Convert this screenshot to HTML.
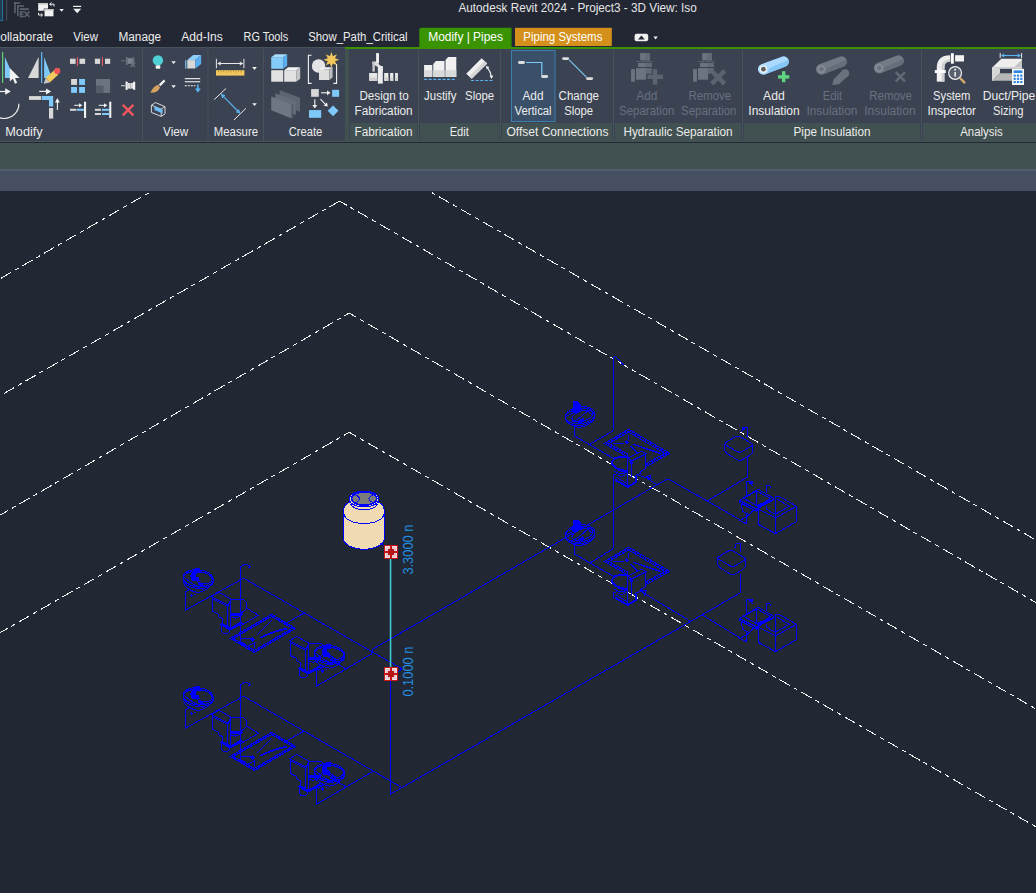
<!DOCTYPE html>
<html lang="en">
<head>
<meta charset="utf-8">
<title>Autodesk Revit 2024 - Project3 - 3D View: Iso</title>
<style>
html,body{margin:0;padding:0;background:#222833;overflow:hidden;}
body{width:1036px;height:893px;font-family:"Liberation Sans", sans-serif;}
svg{display:block;position:absolute;left:0;top:0;}
svg text{font-family:"Liberation Sans", sans-serif;}
</style>
</head>
<body>
<svg width="1036" height="893" viewBox="0 0 1036 893">
<rect x="0" y="0" width="1036" height="893" fill="#222833" />
<rect x="0" y="0" width="1036" height="47" fill="#222733" />
<rect x="0" y="47" width="1036" height="95" fill="#3b4352" />
<rect x="0" y="47" width="345" height="1" fill="#46535a" />
<rect x="0" y="141" width="1036" height="1" fill="#46555a" />
<rect x="0" y="142" width="1036" height="1" fill="#232935" />
<rect x="0" y="143" width="1036" height="26" fill="#415050" />
<rect x="0" y="169" width="1036" height="2" fill="#525c70" />
<rect x="0" y="171" width="1036" height="20" fill="#464e62" />
<rect x="345" y="47" width="691" height="2" fill="#3a9402" />
<path d="M419.3 49 V29.5 Q419.3 27.7 421.2 27.7 H511.4 V49 Z" fill="#3a9402" stroke="none" stroke-width="1" />
<rect x="510.6" y="27.7" width="0.9" height="19.5" fill="#2f7a06" />
<rect x="515" y="27.8" width="96.8" height="18.2" fill="#d4901a" />
<rect x="345" y="49" width="4" height="93" fill="#415050" />
<rect x="350" y="123" width="67.5" height="19" fill="#415050" />
<rect x="420" y="123" width="79.5" height="19" fill="#415050" />
<rect x="502" y="123" width="110" height="19" fill="#415050" />
<rect x="615" y="123" width="126" height="19" fill="#415050" />
<rect x="744" y="123" width="176" height="19" fill="#415050" />
<rect x="923" y="123" width="113" height="19" fill="#415050" />
<rect x="142" y="49" width="1" height="92" fill="#45535a" />
<rect x="207.5" y="49" width="1" height="92" fill="#45535a" />
<rect x="263" y="49" width="1" height="92" fill="#45535a" />
<rect x="418" y="50" width="1" height="91" fill="#45545a" />
<rect x="500" y="50" width="1" height="91" fill="#45545a" />
<rect x="613" y="50" width="1" height="91" fill="#45545a" />
<rect x="742" y="50" width="1" height="91" fill="#45545a" />
<rect x="921" y="50" width="1" height="91" fill="#45545a" />
<rect x="0" y="0" width="2.7" height="20.7" fill="#1d3b52" />
<rect x="2" y="0" width="0.8" height="20.7" fill="#2a82ac" />
<rect x="0" y="20" width="2.8" height="0.8" fill="#2a82ac" />
<rect x="6.2" y="0" width="1" height="20.5" fill="#495062" />
<rect x="14.2" y="2.2" width="6" height="1.6" fill="#5c626c" />
<rect x="14.2" y="2.2" width="1.6" height="11" fill="#5c626c" />
<rect x="17" y="5.2" width="7" height="1.6" fill="#5c626c" />
<rect x="17" y="5.2" width="1.6" height="11" fill="#5c626c" />
<rect x="19.8" y="8.2" width="9" height="1.8" fill="#5c626c" />
<rect x="19.8" y="11.2" width="1.6" height="6" fill="#5c626c" />
<rect x="19.8" y="11.2" width="4.2" height="1.4" fill="#5c626c" />
<rect x="19.8" y="13.5" width="3.6" height="1.3" fill="#5c626c" />
<rect x="19.8" y="15.8" width="4.2" height="1.4" fill="#5c626c" />
<path d="M24.5 11.5 L29.5 17 M29.5 11.5 L24.5 17" fill="none" stroke="#5c626c" stroke-width="1.7" />
<rect x="38.2" y="3.2" width="9.8" height="7.6" fill="#f2f2f2" />
<rect x="38.2" y="3.2" width="9.8" height="1.4" fill="#c8c8c8" />
<rect x="44.1" y="9" width="9.8" height="7.8" fill="#f2f2f2" stroke="#222733" stroke-width="0.8"/>
<rect x="44.1" y="9" width="9.8" height="1.6" fill="#c8c8c8" />
<path d="M54 6.5 V4.2 H50 M51.5 2.6 L49.6 4.2 L51.5 5.8" fill="none" stroke="#f2f2f2" stroke-width="1" />
<path d="M38.6 12.8 V15 H42.2 M40.8 13.4 L42.6 15 L40.8 16.6" fill="none" stroke="#f2f2f2" stroke-width="1" />
<path d="M59.40 9.00 L63.80 9.00 L61.60 11.80 Z" fill="#f0f0f0" stroke="none" stroke-width="1" />
<rect x="73" y="5.8" width="8.2" height="1.2" fill="#f0f0f0" />
<path d="M73.20 8.80 L81.20 8.80 L77.20 13.30 Z" fill="#f0f0f0" stroke="none" stroke-width="1" />
<text x="458.4" y="12.2" font-size="12.5" fill="#e6e6e6" text-anchor="start" textLength="238.4" lengthAdjust="spacingAndGlyphs" >Autodesk Revit 2024 - Project3 - 3D View: Iso</text>
<text x="0.3" y="41" font-size="12" fill="#ececec" text-anchor="start" textLength="52.5" lengthAdjust="spacingAndGlyphs" >ollaborate</text>
<text x="73.3" y="41" font-size="12" fill="#ececec" text-anchor="start" textLength="24.6" lengthAdjust="spacingAndGlyphs" >View</text>
<text x="118.5" y="41" font-size="12" fill="#ececec" text-anchor="start" textLength="42.6" lengthAdjust="spacingAndGlyphs" >Manage</text>
<text x="181.2" y="41" font-size="12" fill="#ececec" text-anchor="start" textLength="41.7" lengthAdjust="spacingAndGlyphs" >Add-Ins</text>
<text x="243.5" y="41" font-size="12" fill="#ececec" text-anchor="start" textLength="44.7" lengthAdjust="spacingAndGlyphs" >RG Tools</text>
<text x="308.2" y="41" font-size="12" fill="#ececec" text-anchor="start" textLength="99.4" lengthAdjust="spacingAndGlyphs" >Show_Path_Critical</text>
<text x="428.2" y="41" font-size="12" fill="#ffffff" text-anchor="start" textLength="74.8" lengthAdjust="spacingAndGlyphs" >Modify | Pipes</text>
<text x="523.3" y="41" font-size="12" fill="#ffffff" text-anchor="start" textLength="79.1" lengthAdjust="spacingAndGlyphs" >Piping Systems</text>
<rect x="634.6" y="33.8" width="13.6" height="7.4" rx="2" fill="#f0f0f0"/>
<path d="M638.00 39.40 L644.80 39.40 L641.40 35.60 Z" fill="#222733" stroke="none" stroke-width="1" />
<path d="M653.40 36.60 L657.80 36.60 L655.60 39.40 Z" fill="#f0f0f0" stroke="none" stroke-width="1" />
<text x="5.3" y="135.6" font-size="12" fill="#ececec" text-anchor="start" textLength="37.4" lengthAdjust="spacingAndGlyphs" >Modify</text>
<text x="163.1" y="135.6" font-size="12" fill="#ececec" text-anchor="start" textLength="25.2" lengthAdjust="spacingAndGlyphs" >View</text>
<text x="213.8" y="135.6" font-size="12" fill="#ececec" text-anchor="start" textLength="44.2" lengthAdjust="spacingAndGlyphs" >Measure</text>
<text x="288.7" y="135.6" font-size="12" fill="#ececec" text-anchor="start" textLength="33.6" lengthAdjust="spacingAndGlyphs" >Create</text>
<text x="354.5" y="135.6" font-size="12" fill="#ececec" text-anchor="start" textLength="58.1" lengthAdjust="spacingAndGlyphs" >Fabrication</text>
<text x="449.7" y="135.6" font-size="12" fill="#ececec" text-anchor="start" textLength="19.2" lengthAdjust="spacingAndGlyphs" >Edit</text>
<text x="506.5" y="135.6" font-size="12" fill="#ececec" text-anchor="start" textLength="102" lengthAdjust="spacingAndGlyphs" >Offset Connections</text>
<text x="623.4" y="135.6" font-size="12" fill="#ececec" text-anchor="start" textLength="109.2" lengthAdjust="spacingAndGlyphs" >Hydraulic Separation</text>
<text x="793.5" y="135.6" font-size="12" fill="#ececec" text-anchor="start" textLength="77" lengthAdjust="spacingAndGlyphs" >Pipe Insulation</text>
<text x="960.2" y="135.6" font-size="12" fill="#ececec" text-anchor="start" textLength="42.5" lengthAdjust="spacingAndGlyphs" >Analysis</text>
<text x="359.4" y="99.8" font-size="12" fill="#ececec" text-anchor="start" textLength="49.3" lengthAdjust="spacingAndGlyphs" >Design to</text>
<text x="354.5" y="114.7" font-size="12" fill="#ececec" text-anchor="start" textLength="58.1" lengthAdjust="spacingAndGlyphs" >Fabrication</text>
<text x="424.1" y="99.8" font-size="12" fill="#ececec" text-anchor="start" textLength="32.4" lengthAdjust="spacingAndGlyphs" >Justify</text>
<text x="465.1" y="99.8" font-size="12" fill="#ececec" text-anchor="start" textLength="29.1" lengthAdjust="spacingAndGlyphs" >Slope</text>
<rect x="511.5" y="50.5" width="43.5" height="71" fill="#3a5068" stroke="#3a7fb0" stroke-width="1"/>
<text x="522.5" y="99.8" font-size="12" fill="#ececec" text-anchor="start" textLength="21" lengthAdjust="spacingAndGlyphs" >Add</text>
<text x="514.5" y="114.7" font-size="12" fill="#ececec" text-anchor="start" textLength="37.1" lengthAdjust="spacingAndGlyphs" >Vertical</text>
<text x="558.6" y="99.8" font-size="12" fill="#ececec" text-anchor="start" textLength="40.4" lengthAdjust="spacingAndGlyphs" >Change</text>
<text x="564.2" y="114.7" font-size="12" fill="#ececec" text-anchor="start" textLength="28.7" lengthAdjust="spacingAndGlyphs" >Slope</text>
<text x="636.3" y="99.8" font-size="12" fill="#687080" text-anchor="start" textLength="21" lengthAdjust="spacingAndGlyphs" >Add</text>
<text x="619.1" y="114.7" font-size="12" fill="#687080" text-anchor="start" textLength="55.4" lengthAdjust="spacingAndGlyphs" >Separation</text>
<text x="688.5" y="99.8" font-size="12" fill="#687080" text-anchor="start" textLength="42.5" lengthAdjust="spacingAndGlyphs" >Remove</text>
<text x="681.1" y="114.7" font-size="12" fill="#687080" text-anchor="start" textLength="55.3" lengthAdjust="spacingAndGlyphs" >Separation</text>
<text x="763" y="99.8" font-size="12" fill="#ececec" text-anchor="start" textLength="21.7" lengthAdjust="spacingAndGlyphs" >Add</text>
<text x="748.3" y="114.7" font-size="12" fill="#ececec" text-anchor="start" textLength="51.4" lengthAdjust="spacingAndGlyphs" >Insulation</text>
<text x="822.8" y="99.8" font-size="12" fill="#687080" text-anchor="start" textLength="19.3" lengthAdjust="spacingAndGlyphs" >Edit</text>
<text x="806.4" y="114.7" font-size="12" fill="#687080" text-anchor="start" textLength="51.1" lengthAdjust="spacingAndGlyphs" >Insulation</text>
<text x="869.3" y="99.8" font-size="12" fill="#687080" text-anchor="start" textLength="42.5" lengthAdjust="spacingAndGlyphs" >Remove</text>
<text x="864.2" y="114.7" font-size="12" fill="#687080" text-anchor="start" textLength="51.4" lengthAdjust="spacingAndGlyphs" >Insulation</text>
<text x="933.1" y="99.8" font-size="12" fill="#ececec" text-anchor="start" textLength="37.3" lengthAdjust="spacingAndGlyphs" >System</text>
<text x="927.4" y="114.7" font-size="12" fill="#ececec" text-anchor="start" textLength="48.6" lengthAdjust="spacingAndGlyphs" >Inspector</text>
<text x="982.7" y="99.8" font-size="12" fill="#ececec" text-anchor="start" textLength="52.6" lengthAdjust="spacingAndGlyphs" >Duct/Pipe</text>
<text x="993" y="114.7" font-size="12" fill="#ececec" text-anchor="start" textLength="30.4" lengthAdjust="spacingAndGlyphs" >Sizing</text>
<rect x="2" y="52" width="1.2" height="31" fill="#5fd27a" />
<path d="M4.90 56.90 L4.90 77.90 L10.60 77.90 L10.60 70.00 Z" fill="#7ec8fa" stroke="none" stroke-width="1" />
<path d="M9.80 68.00 L9.80 81.50 L12.80 78.80 L15.00 83.80 L17.20 82.80 L15.00 78.00 L19.60 78.00 Z" fill="#f2f2f2" stroke="none" stroke-width="1" />
<path d="M28.00 77.90 L38.60 77.90 L38.60 56.90 Z" fill="#d8d8d8" stroke="none" stroke-width="1" />
<rect x="41" y="52" width="1.3" height="31" fill="#5ab4f0" />
<path d="M44.10 56.90 L44.10 77.90 L52.00 77.90 Z" fill="#7ec8fa" stroke="none" stroke-width="1" />
<path d="M45.80 77.80 L43.60 83.80 L49.80 82.40 Z" fill="#c8c8c8" stroke="none" stroke-width="1" />
<path d="M45.80 77.80 L54.40 70.00 L58.20 74.80 L49.80 82.40 Z" fill="#f2c75c" stroke="none" stroke-width="1" />
<circle cx="57.2" cy="70.9" r="3.1" fill="#f0555a" stroke="none" stroke-width="1" />
<rect x="70" y="58.7" width="5.6" height="5.2" fill="#d8d8d8" />
<rect x="79.5" y="58.7" width="5.6" height="5.2" fill="#d8d8d8" />
<rect x="76.9" y="57.2" width="1.1" height="8.8" fill="#f2555f" />
<rect x="94.9" y="58.7" width="5.2" height="5.2" fill="#d8d8d8" />
<rect x="105" y="58.7" width="5.2" height="5.2" fill="#d8d8d8" />
<rect x="101.9" y="57.2" width="1.1" height="8.8" fill="#f2555f" />
<rect x="121" y="60.3" width="4" height="1" fill="#69717e" />
<path d="M125.80 57.00 L127.60 57.00 L127.60 65.00 L125.80 65.00 Z" fill="#69717e" stroke="none" stroke-width="1" />
<rect x="127.6" y="58.2" width="5.2" height="5.6" fill="#7c8490" />
<rect x="132.6" y="57.4" width="1.8" height="7.2" fill="#69717e" />
<path d="M130.5 62.8 L135 67 M135 62.8 L130.5 67" fill="none" stroke="#69717e" stroke-width="1.4" />
<rect x="71.1" y="79" width="5.9" height="5.9" fill="#d8d8d8" />
<rect x="79.1" y="79" width="5.9" height="5.9" fill="#7ec8fa" />
<rect x="71.1" y="87" width="5.9" height="5.9" fill="#7ec8fa" />
<rect x="79.1" y="87" width="5.9" height="5.9" fill="#7ec8fa" />
<rect x="96" y="79" width="14.1" height="13.9" fill="#6b7380" />
<rect x="96" y="85.6" width="7.6" height="7.3" fill="#565d6a" />
<rect x="121" y="85.2" width="4" height="1" fill="#d8d8d8" />
<path d="M125.60 81.20 L127.80 82.00 L127.80 89.40 L125.60 90.20 Z" fill="#f2f2f2" stroke="none" stroke-width="1" />
<rect x="127.8" y="83" width="5.2" height="5.6" fill="#dcdcdc" />
<rect x="130" y="83" width="1" height="5.6" fill="#b0b0b0" />
<path d="M133.00 82.00 L135.20 81.40 L135.20 90.00 L133.00 89.40 Z" fill="#f2f2f2" stroke="none" stroke-width="1" />
<path d="M-10.5 103.8 A14.7 14.7 0 0 0 18.9 103.8" fill="none" stroke="#f2f2f2" stroke-width="1.2" />
<path d="M0 91.5 H7" fill="none" stroke="#f2f2f2" stroke-width="1.2" />
<path d="M5.20 88.20 L10.80 91.50 L5.20 94.80 Z" fill="#f2f2f2" stroke="none" stroke-width="1" />
<rect x="29" y="96.1" width="12.3" height="3.8" fill="#d8d8d8" />
<path d="M42.00 96.10 L53.20 96.10 L53.20 106.60 L49.00 106.60 L49.00 99.90 L42.00 99.90 Z" fill="#7ec8fa" stroke="none" stroke-width="1" />
<rect x="49" y="108" width="4.2" height="10.6" fill="#d8d8d8" />
<path d="M39.2 91.4 H47" fill="none" stroke="#f2f2f2" stroke-width="1.2" />
<path d="M46.00 88.40 L51.20 91.40 L46.00 94.40 Z" fill="#f2f2f2" stroke="none" stroke-width="1" />
<path d="M57.4 110 V101" fill="none" stroke="#f2f2f2" stroke-width="1.1" />
<path d="M55.00 102.60 L57.40 98.00 L59.80 102.60 Z" fill="#f2f2f2" stroke="none" stroke-width="1" />
<rect x="84" y="101.7" width="2.1" height="16.2" fill="#f2f2f2" />
<rect x="70" y="108.8" width="6.4" height="2" fill="#d8d8d8" />
<rect x="77" y="108.8" width="7" height="2" fill="#7ec8fa" />
<path d="M74.2 105.3 H80" fill="none" stroke="#f2f2f2" stroke-width="1" />
<path d="M79.00 103.20 L82.40 105.30 L79.00 107.40 Z" fill="#f2f2f2" stroke="none" stroke-width="1" />
<rect x="109.2" y="101.7" width="2.1" height="16.2" fill="#f2f2f2" />
<rect x="94.9" y="108.8" width="6" height="2" fill="#d8d8d8" />
<rect x="94.9" y="113" width="6" height="2" fill="#d8d8d8" />
<rect x="101.9" y="108.8" width="7.3" height="2" fill="#7ec8fa" />
<rect x="101.9" y="113" width="7.3" height="2" fill="#7ec8fa" />
<path d="M98.8 105.3 H105" fill="none" stroke="#f2f2f2" stroke-width="1" />
<path d="M104.00 103.20 L107.40 105.30 L104.00 107.40 Z" fill="#f2f2f2" stroke="none" stroke-width="1" />
<path d="M122.8 104.8 L133.4 115.4 M133.4 104.8 L122.8 115.4" fill="none" stroke="#f2555f" stroke-width="2.4" />
<circle cx="157.9" cy="60.4" r="5.2" fill="#4fd0d6" stroke="none" stroke-width="1" />
<rect x="155.7" y="65.2" width="4.6" height="3.6" rx="1" fill="#f4f4f4"/>
<path d="M171.30 61.20 L175.90 61.20 L173.60 64.00 Z" fill="#f2f2f2" stroke="none" stroke-width="1" />
<rect x="185.2" y="60.2" width="1.2" height="8.4" fill="#7ec8fa" />
<rect x="187.3" y="60.1" width="8" height="8.4" fill="#d8d8d8" />
<path d="M187.30 60.10 L193.20 55.00 L201.20 55.00 L195.30 60.10 Z" fill="#8dd0fb" stroke="none" stroke-width="1" />
<path d="M195.30 60.10 L201.20 55.00 L201.20 63.90 L195.30 68.50 Z" fill="#5aaef0" stroke="none" stroke-width="1" />
<path d="M150.4 92.8 C152.4 88.2 155 85.6 158.2 84.8 L160 87.6 C158.6 91.2 155.4 93 150.4 92.8 Z" fill="#d6a262" stroke="none" stroke-width="1" />
<path d="M159.6 85.4 L164.6 80.4" fill="none" stroke="#f2f2f2" stroke-width="2.2" />
<path d="M171.30 85.30 L175.90 85.30 L173.60 88.10 Z" fill="#f2f2f2" stroke="none" stroke-width="1" />
<rect x="184.8" y="78.1" width="15.4" height="1.1" fill="#f2f2f2" />
<rect x="184.8" y="81.2" width="15.4" height="1.1" fill="#f2f2f2" />
<path d="M184.8 85.7 H195.5" fill="none" stroke="#f2f2f2" stroke-width="1.1" stroke-dasharray="2 1"/>
<path d="M197.9 84.6 V89.4" fill="none" stroke="#5ab4f0" stroke-width="1.6" />
<path d="M195.00 88.60 L200.80 88.60 L197.90 92.80 Z" fill="#5ab4f0" stroke="none" stroke-width="1" />
<path d="M151.40 105.20 L155.40 102.60 L165.00 106.60 L165.00 113.80 L161.20 116.40 L151.40 112.40 Z" fill="none" stroke="#e8e8e8" stroke-width="0.9" />
<path d="M151.4 105.2 L161.2 109.2 L165 106.6 M161.2 109.2 V116.4" fill="none" stroke="#e8e8e8" stroke-width="0.9" />
<path d="M154.40 106.20 L162.60 109.60 L162.60 113.40 L154.40 110.00 Z" fill="#6fbef6" stroke="none" stroke-width="1" />
<path d="M216.4 58.8 V68.2 M243.9 58.8 V68.2 M218 63.5 H242.4" fill="none" stroke="#e8e8e8" stroke-width="1" />
<path d="M217.20 63.50 L220.60 61.40 L220.60 65.60 Z" fill="#e8e8e8" stroke="none" stroke-width="1" />
<path d="M243.20 63.50 L239.80 61.40 L239.80 65.60 Z" fill="#e8e8e8" stroke="none" stroke-width="1" />
<rect x="216" y="70.2" width="28.4" height="5.4" fill="#f2c75c" />
<path d="M218.5 70.2 v2 M221 70.2 v2.6 M223.5 70.2 v2 M226 70.2 v2.6 M228.5 70.2 v2 M231 70.2 v2.6 M233.5 70.2 v2 M236 70.2 v2.6 M238.5 70.2 v2 M241 70.2 v2.6" fill="none" stroke="#b08a30" stroke-width="0.7" />
<path d="M252.20 67.10 L256.80 67.10 L254.50 69.90 Z" fill="#f2f2f2" stroke="none" stroke-width="1" />
<path d="M214.2 99.6 L226.1 88.4 M234 119.9 L246 108.3" fill="none" stroke="#e8e8e8" stroke-width="1" />
<path d="M222.4 95.4 L238.8 112" fill="none" stroke="#5ab4f0" stroke-width="1.1" />
<path d="M220.60 93.60 L225.40 95.20 L222.40 98.40 Z" fill="#5ab4f0" stroke="none" stroke-width="1" />
<path d="M240.60 113.80 L235.80 112.20 L238.80 109.00 Z" fill="#5ab4f0" stroke="none" stroke-width="1" />
<path d="M252.20 103.20 L256.80 103.20 L254.50 106.00 Z" fill="#f2f2f2" stroke="none" stroke-width="1" />
<rect x="271.2" y="57.2" width="12" height="11.6" fill="#86ccfa" />
<path d="M271.20 57.20 L275.20 54.20 L287.20 54.20 L283.20 57.20 Z" fill="#a8dcff" stroke="none" stroke-width="1" />
<path d="M283.20 57.20 L287.20 54.20 L287.20 65.80 L283.20 68.80 Z" fill="#5aaef0" stroke="none" stroke-width="1" />
<rect x="271.2" y="70.2" width="12" height="11.5" fill="#e2e2e2" />
<path d="M271.20 70.20 L271.20 70.20 L283.20 70.20 L283.20 70.20 Z" fill="#f4f4f4" stroke="none" stroke-width="1" />
<path d="M283.20 70.20 L283.20 70.20 L283.20 81.70 L283.20 81.70 Z" fill="#c4c4c4" stroke="none" stroke-width="1" />
<rect x="284.2" y="70.2" width="12" height="11.5" fill="#e2e2e2" />
<path d="M284.20 70.20 L288.20 67.20 L300.20 67.20 L296.20 70.20 Z" fill="#f4f4f4" stroke="none" stroke-width="1" />
<path d="M296.20 70.20 L300.20 67.20 L300.20 78.70 L296.20 81.70 Z" fill="#c4c4c4" stroke="none" stroke-width="1" />
<path d="M311.6 55.2 H308.4 V83.4 H311.6 M333.4 83.4 H336.6 V64" fill="none" stroke="#f2f2f2" stroke-width="1.1" />
<circle cx="318.6" cy="66" r="6.8" fill="#e4e4e4" stroke="none" stroke-width="1" />
<rect x="319" y="69.6" width="10.4" height="10.4" fill="#dedede" />
<path d="M319.00 69.60 L322.20 67.20 L332.60 67.20 L329.40 69.60 Z" fill="#f2f2f2" stroke="none" stroke-width="1" />
<path d="M329.40 69.60 L332.60 67.20 L332.60 77.60 L329.40 80.00 Z" fill="#bdbdbd" stroke="none" stroke-width="1" />
<path d="M331.40 52.00 L332.89 56.20 L336.92 54.28 L335.00 58.31 L339.20 59.80 L335.00 61.29 L336.92 65.32 L332.89 63.40 L331.40 67.60 L329.91 63.40 L325.88 65.32 L327.80 61.29 L323.60 59.80 L327.80 58.31 L325.88 54.28 L329.91 56.20 Z" fill="#f2c75c" stroke="none" stroke-width="1" />
<path d="M279.60 90.00 L300.00 97.80 L300.00 111.80 L279.60 103.60 Z" fill="#5d6572" stroke="none" stroke-width="1" stroke-linejoin="round" stroke="#5d6572" stroke-width="1.6"/>
<path d="M275.40 93.30 L295.80 101.10 L295.80 115.10 L275.40 106.90 Z" fill="#656d7a" stroke="none" stroke-width="1" stroke-linejoin="round" stroke="#656d7a" stroke-width="1.6"/>
<path d="M271.20 96.60 L291.60 104.40 L291.60 118.40 L271.20 110.20 Z" fill="#6e7683" stroke="none" stroke-width="1" stroke-linejoin="round" stroke="#6e7683" stroke-width="1.6"/>
<path d="M291.60 104.40 L293.20 103.20 L293.20 117.20 L291.60 118.40 Z" fill="#545b68" stroke="none" stroke-width="1" />
<rect x="311.1" y="89.1" width="7.7" height="7.7" fill="#d8d8d8" />
<rect x="332.1" y="89.8" width="7" height="7" fill="#7ec8fa" />
<rect x="309" y="110.1" width="12.2" height="7.7" fill="#7ec8fa" />
<path d="M333.10 105.40 L338.50 110.80 L333.10 116.20 L327.70 110.80 Z" fill="#7ec8fa" stroke="none" stroke-width="1" />
<path d="M321 92.8 H328" fill="none" stroke="#f2f2f2" stroke-width="1.1" />
<path d="M327.00 90.40 L330.60 92.80 L327.00 95.20 Z" fill="#f2f2f2" stroke="none" stroke-width="1" />
<path d="M314.8 99.2 V106" fill="none" stroke="#f2f2f2" stroke-width="1.1" />
<path d="M312.40 105.00 L314.80 108.60 L317.20 105.00 Z" fill="#f2f2f2" stroke="none" stroke-width="1" />
<path d="M320.4 99.2 L326 104.8" fill="none" stroke="#f2f2f2" stroke-width="1.1" />
<path d="M327.80 106.60 L323.60 105.80 L327.00 102.40 Z" fill="#f2f2f2" stroke="none" stroke-width="1" />
<rect x="376.1" y="53.1" width="2.9" height="10.4" fill="#f0f0f0" />
<path d="M372.40 61.60 L375.40 61.60 L382.80 67.60 L382.80 71.00 L377.90 71.00 L377.90 67.00 L372.40 64.00 Z" fill="#e0e0e0" stroke="none" stroke-width="1" />
<rect x="372.4" y="62" width="2.4" height="9.6" fill="#c8c8c8" />
<rect x="377.9" y="66" width="4.9" height="17.6" fill="#ececec" />
<rect x="369.1" y="73" width="8.2" height="7.8" fill="#e6e6e6" />
<rect x="369.1" y="77.4" width="8.2" height="3.4" fill="#cfcfcf" />
<rect x="384.2" y="73" width="4.199999999999989" height="7.8" fill="#ececec" />
<rect x="384.2" y="77.4" width="4.199999999999989" height="3.4" fill="#d2d2d2" />
<rect x="390.1" y="73" width="3.1999999999999886" height="7.8" fill="#ececec" />
<rect x="390.1" y="77.4" width="3.1999999999999886" height="3.4" fill="#d2d2d2" />
<rect x="395.1" y="73" width="2.7999999999999545" height="7.8" fill="#ececec" />
<rect x="395.1" y="77.4" width="2.7999999999999545" height="3.4" fill="#d2d2d2" />
<path d="M424.10 65.00 L424.10 65.00 L432.30 65.00 L432.30 76.90 L424.10 76.90 Z" fill="#f1f1f1" stroke="none" stroke-width="1" />
<rect x="424.1" y="70.2" width="8.199999999999989" height="6.7" fill="#dadada" />
<path d="M433.30 64.10 L435.90 61.10 L444.50 61.10 L444.50 76.90 L433.30 76.90 Z" fill="#f1f1f1" stroke="none" stroke-width="1" />
<rect x="433.3" y="70.2" width="11.199999999999989" height="6.7" fill="#dadada" />
<path d="M445.50 59.90 L448.10 56.90 L456.30 56.90 L456.30 76.90 L445.50 76.90 Z" fill="#f1f1f1" stroke="none" stroke-width="1" />
<rect x="445.5" y="70.2" width="10.800000000000011" height="6.7" fill="#dadada" />
<path d="M424.1 79.4 H456.3" fill="none" stroke="#5ab4f0" stroke-width="1.1" stroke-dasharray="3 1.6"/>
<path d="M466.20 73.70 L481.60 58.30 L487.20 63.40 L471.80 78.80 Z" fill="#f0f0f0" stroke="none" stroke-width="1" stroke="#f0f0f0" stroke-width="1" stroke-linejoin="round"/>
<path d="M469.00 76.40 L484.40 61.00 L487.20 63.40 L471.80 78.80 Z" fill="#d6d6d6" stroke="none" stroke-width="1" />
<path d="M471.1 80.5 H492.8" fill="none" stroke="#5ab4f0" stroke-width="1.1" stroke-dasharray="3 1.6"/>
<path d="M487.4 67.6 Q491 72 491.4 77" fill="none" stroke="#f2f2f2" stroke-width="1.1" />
<path d="M485.80 66.00 L489.40 67.00 L486.80 69.60 Z" fill="#f2f2f2" stroke="none" stroke-width="1" />
<path d="M491.60 79.00 L489.60 75.80 L493.20 75.60 Z" fill="#f2f2f2" stroke="none" stroke-width="1" />
<rect x="518" y="61.1" width="7" height="2.8" rx="1.4" fill="#dcdcdc"/>
<path d="M526.1 62.5 H541.8 V75.1" fill="none" stroke="#7ec8fa" stroke-width="1.2" />
<rect x="541.1" y="75.1" width="7" height="2.8" rx="1.4" fill="#dcdcdc"/>
<rect x="562.1" y="57.2" width="7" height="2.8" rx="1.4" fill="#dcdcdc"/>
<path d="M569.1 59.9 L586.6 77.4" fill="none" stroke="#7ec8fa" stroke-width="1.2" />
<rect x="586.1" y="77.2" width="7" height="2.8" rx="1.4" fill="#dcdcdc"/>
<rect x="640.2" y="53.1" width="9.8" height="7.3" fill="#6c7481" />
<rect x="645.2" y="53.1" width="4.8" height="7.3" fill="#626a77" />
<path d="M636.3 61.6 H652.8" fill="none" stroke="#6c7481" stroke-width="0.9" stroke-dasharray="1.4 0.8"/>
<rect x="638.1" y="62.9" width="13.6" height="4.1" fill="#6c7481" />
<rect x="645.2" y="62.9" width="6.5" height="4.1" fill="#626a77" />
<rect x="636" y="68.1" width="10.1" height="11.6" fill="#6c7481" />
<rect x="646.1" y="68.1" width="5.6" height="5.6" fill="#626a77" />
<rect x="631.1" y="69.1" width="3.8" height="12.6" fill="#6c7481" />
<rect x="647.5" y="74.7" width="15.4" height="4.3" fill="#5c6370" />
<rect x="652.8" y="69.1" width="4.5" height="15.5" fill="#5c6370" />
<rect x="702.2" y="53.1" width="9.8" height="7.3" fill="#6c7481" />
<rect x="707.2" y="53.1" width="4.8" height="7.3" fill="#626a77" />
<path d="M698.3 61.6 H714.8" fill="none" stroke="#6c7481" stroke-width="0.9" stroke-dasharray="1.4 0.8"/>
<rect x="700.1" y="62.9" width="13.6" height="4.1" fill="#6c7481" />
<rect x="707.2" y="62.9" width="6.5" height="4.1" fill="#626a77" />
<rect x="698" y="68.1" width="10.1" height="11.6" fill="#6c7481" />
<rect x="708.1" y="68.1" width="5.6" height="5.6" fill="#626a77" />
<rect x="693.1" y="69.1" width="3.8" height="12.6" fill="#6c7481" />
<path d="M711.6 70.9 L724.6 83.9 M724.6 70.9 L711.6 83.9" fill="none" stroke="#5c6370" stroke-width="4.4" />
<path d="M765.27 74.16 L785.47 66.56 A5.3 5.3 0 0 0 781.73 56.64 L761.53 64.24 A5.3 5.3 0 0 0 765.27 74.16 Z" fill="#aadaff" stroke="none" stroke-width="1" />
<path d="M765.27 74.16 L785.47 66.56 A5.3 5.3 0 0 0 788.56 59.73 L763.93 70.60 Z" fill="#86c6f6" stroke="none" stroke-width="1" />
<circle cx="763.4" cy="69.2" r="5.3" fill="#aadaff" stroke="none" stroke-width="1" />
<circle cx="763.4" cy="69.2" r="3.7" fill="#f4f4f4" stroke="none" stroke-width="1" />
<circle cx="763.4" cy="69.2" r="2.4" fill="#5e5e5e" stroke="none" stroke-width="1" />
<rect x="778.1" y="75.2" width="11.2" height="3.4" fill="#5fd481" />
<rect x="782" y="71.2" width="3.4" height="11" fill="#5fd481" />
<path d="M823.27 74.16 L843.47 66.56 A5.3 5.3 0 0 0 839.73 56.64 L819.53 64.24 A5.3 5.3 0 0 0 823.27 74.16 Z" fill="#727a86" stroke="none" stroke-width="1" />
<path d="M823.27 74.16 L843.47 66.56 A5.3 5.3 0 0 0 846.56 59.73 L821.93 70.60 Z" fill="#666e7b" stroke="none" stroke-width="1" />
<circle cx="821.4" cy="69.2" r="5.3" fill="#727a86" stroke="none" stroke-width="1" />
<circle cx="821.4" cy="69.2" r="3.7" fill="#8a919c" stroke="none" stroke-width="1" />
<circle cx="821.4" cy="69.2" r="2.4" fill="#6a727e" stroke="none" stroke-width="1" />
<path d="M832.20 85.00 L833.60 79.40 L842.40 70.40 L848.00 76.00 L839.00 84.20 Z" fill="#6a727e" stroke="none" stroke-width="1" />
<circle cx="845.2" cy="73.2" r="3.9" fill="#6a727e" stroke="none" stroke-width="1" />
<path d="M881.09 72.95 L900.49 65.55 A5.3 5.3 0 0 0 896.71 55.65 L877.31 63.05 A5.3 5.3 0 0 0 881.09 72.95 Z" fill="#727a86" stroke="none" stroke-width="1" />
<path d="M881.09 72.95 L900.49 65.55 A5.3 5.3 0 0 0 903.55 58.71 L879.73 69.40 Z" fill="#666e7b" stroke="none" stroke-width="1" />
<circle cx="879.2" cy="68" r="5.3" fill="#727a86" stroke="none" stroke-width="1" />
<circle cx="879.2" cy="68" r="3.7" fill="#8a919c" stroke="none" stroke-width="1" />
<circle cx="879.2" cy="68" r="2.4" fill="#6a727e" stroke="none" stroke-width="1" />
<path d="M895.8 72.2 L905 81.4 M905 72.2 L895.8 81.4" fill="none" stroke="#636a77" stroke-width="2.4" />
<rect x="936.8" y="67.1" width="7.6" height="14.5" fill="#f2f2f2" />
<rect x="941.6" y="67.1" width="2.8" height="14.5" fill="#d0d0d0" />
<rect x="934.8" y="70.1" width="11" height="2.9" fill="#ffffff" />
<path d="M936.8 67.5 Q936.8 55.4 950.2 55.2 L950.2 61.6 Q944.4 61.8 944.4 67.5 Z" fill="#eeeeee" stroke="none" stroke-width="1" />
<path d="M941.4 67.5 Q941.6 59.6 950.2 59.2 L950.2 61.6 Q944.4 61.8 944.4 67.5 Z" fill="#cfcfcf" stroke="none" stroke-width="1" />
<rect x="950.9" y="53.2" width="2.9" height="10.5" fill="#ffffff" />
<rect x="955.1" y="55.2" width="8.9" height="6.3" fill="#f2f2f2" />
<circle cx="955.1" cy="73" r="6.4" fill="#596070" stroke="#f0f0f0" stroke-width="1.2" />
<rect x="954.4" y="72" width="1.5" height="4.6" fill="#f4f4f4" />
<circle cx="955.15" cy="69.8" r="0.95" fill="#f4f4f4" stroke="none" stroke-width="1" />
<path d="M960 78 L965 83.2" fill="none" stroke="#d9aa6c" stroke-width="2.4" />
<path d="M1000.2 53 V58 M1021.6 53 V58" fill="none" stroke="#e8e8e8" stroke-width="1" />
<path d="M1002 55.5 H1020" fill="none" stroke="#5ab4f0" stroke-width="1.1" />
<path d="M1000.80 55.50 L1004.20 53.40 L1004.20 57.60 Z" fill="#5ab4f0" stroke="none" stroke-width="1" />
<path d="M1021.00 55.50 L1017.60 53.40 L1017.60 57.60 Z" fill="#5ab4f0" stroke="none" stroke-width="1" />
<path d="M992.30 67.60 L1001.30 58.80 L1022.00 58.80 L1022.00 67.60 Z" fill="#eeeeee" stroke="none" stroke-width="1" />
<path d="M1013.60 67.60 L1022.00 59.60 L1022.00 67.60 Z" fill="#c6c6c6" stroke="none" stroke-width="1" />
<rect x="992.3" y="67.4" width="29.7" height="1.3" fill="#f4f4f4" />
<path d="M992.30 67.60 L1000.00 68.60 L1000.00 73.20 L992.30 80.80 Z" fill="#d6d6d6" stroke="none" stroke-width="1" />
<path d="M992.30 80.80 L1000.00 73.20 L1022.00 73.20 L1022.00 80.80 Z" fill="#b6b6b6" stroke="none" stroke-width="1" />
<rect x="992.3" y="67.6" width="1.1" height="13.2" fill="#eaeaea" />
<rect x="1012" y="68.8" width="12" height="16.2" fill="#fafafa" />
<rect x="1013.6" y="70.4" width="8.8" height="2.6" fill="#2a86e4" />
<rect x="1013.6" y="74.6" width="2.2" height="2.1" fill="#2a86e4" />
<rect x="1016.9" y="74.6" width="2.2" height="2.1" fill="#2a86e4" />
<rect x="1020.2" y="74.6" width="2.2" height="2.1" fill="#2a86e4" />
<rect x="1013.6" y="77.8" width="2.2" height="2.1" fill="#2a86e4" />
<rect x="1016.9" y="77.8" width="2.2" height="2.1" fill="#2a86e4" />
<rect x="1020.2" y="77.8" width="2.2" height="2.1" fill="#2a86e4" />
<rect x="1013.6" y="81.0" width="2.2" height="2.1" fill="#2a86e4" />
<rect x="1016.9" y="81.0" width="2.2" height="2.1" fill="#2a86e4" />
<rect x="1020.2" y="81.0" width="2.2" height="2.1" fill="#2a86e4" />
<g shape-rendering="crispEdges" fill="none" stroke-linecap="butt">
<line x1="148.3" y1="193.1" x2="0" y2="278.8" stroke="#f4f4f4" stroke-width="1" stroke-dasharray="11.8 4.4 4.4 4.4" stroke-dashoffset="16.45"/>
<line x1="431.9" y1="192.6" x2="1036" y2="540.1" stroke="#f4f4f4" stroke-width="1" stroke-dasharray="11.8 4.4 4.4 4.4" stroke-dashoffset="16.7"/>
<line x1="339.6" y1="201.1" x2="0" y2="395.7" stroke="#f4f4f4" stroke-width="1" stroke-dasharray="11.8 4.4 4.4 4.4" stroke-dashoffset="0"/>
<line x1="339.6" y1="201.1" x2="1036" y2="602.6" stroke="#f4f4f4" stroke-width="1" stroke-dasharray="11.8 4.4 4.4 4.4" stroke-dashoffset="3.6"/>
<line x1="349.2" y1="313.1" x2="0" y2="515.2" stroke="#f4f4f4" stroke-width="1" stroke-dasharray="11.8 4.4 4.4 4.4" stroke-dashoffset="6"/>
<line x1="349.2" y1="313.1" x2="1036" y2="709" stroke="#f4f4f4" stroke-width="1" stroke-dasharray="11.8 4.4 4.4 4.4" stroke-dashoffset="3.8"/>
<line x1="349.2" y1="432.3" x2="0" y2="632.8" stroke="#f4f4f4" stroke-width="1" stroke-dasharray="11.8 4.4 4.4 4.4" stroke-dashoffset="6"/>
<line x1="349.2" y1="432.3" x2="1036" y2="826.9" stroke="#f4f4f4" stroke-width="1" stroke-dasharray="11.8 4.4 4.4 4.4" stroke-dashoffset="3.8"/>
<ellipse cx="198.2" cy="578.3" rx="15.2" ry="8.6" transform="rotate(6 198.2 578.3)" fill="none" stroke="#0000ff" stroke-width="1"/>
<ellipse cx="198.2" cy="579.9" rx="15.2" ry="8.6" transform="rotate(6 198.2 579.9)" fill="none" stroke="#0000ff" stroke-width="1"/>
<path d="M183.6 583.4 Q186.0 590.0 198.0 592.6 Q208.0 591.0 212.6 582.0" fill="none" stroke="#0000ff" stroke-width="1"/>
<ellipse cx="202.8" cy="577.9" rx="9.6" ry="5.4" transform="rotate(14 202.8 577.9)" fill="none" stroke="#0000ff" stroke-width="1"/>
<path d="M195.0 568.9 L199.0 568.9 L199.0 572.7 L195.0 573.2 L195.0 576.8 L198.2 577.5 L199.0 580.4 L192.4 581.0 L190.6 575.4 L193.0 571.4 Z" fill="#0000ff" stroke="#0000ff" stroke-width="1"/>
<path d="M199.0 583.4 L205.0 585.6 L205.2 586.6 L198.8 584.6 Z" fill="#0000ff" stroke="#0000ff" stroke-width="1"/>
<path d="M184.4 577.6 L193.0 584.2 L203.0 589.4" fill="none" stroke="#0000ff" stroke-width="1"/>
<path d="M189.1 589.6 L185.3 592.1 L185.3 610.2" fill="none" stroke="#0000ff" stroke-width="1"/>
<path d="M190.3 595.4 L191.4 594.4 L192.6 595.4 L191.4 596.5 Z" fill="#0000ff" stroke="#0000ff" stroke-width="1"/>
<path d="M194.4 594.1 L196.1 594.1" fill="none" stroke="#0000ff" stroke-width="1"/>
<path d="M211.4 596.7 L218.9 592.4 L230.8 598.9 L230.8 600.2" fill="none" stroke="#0000ff" stroke-width="1"/>
<path d="M211.4 596.7 L228.3 605.2 L230.8 599.2" fill="none" stroke="#0000ff" stroke-width="1"/>
<path d="M212.4 598.5 L227.4 606.3" fill="none" stroke="#0000ff" stroke-width="1"/>
<path d="M212.6 597.4 L212.6 611.5 L218.3 614.2 L218.3 616.7 L222.4 618.4 L222.4 623.8" fill="none" stroke="#0000ff" stroke-width="1"/>
<path d="M227.1 605.4 L227.1 629.3" fill="none" stroke="#0000ff" stroke-width="1"/>
<path d="M230.0 600.4 L230.0 627.8" fill="none" stroke="#0000ff" stroke-width="1"/>
<path d="M230.8 599.5 L243.8 599.5 L246.8 603.3 L246.8 608.3 L241.5 613.0 L230.8 613.0" fill="none" stroke="#0000ff" stroke-width="1"/>
<path d="M230.8 614.0 L241.5 614.0" fill="none" stroke="#0000ff" stroke-width="1"/>
<path d="M230.8 615.0 L240.2 615.0 L243.8 611.2" fill="none" stroke="#0000ff" stroke-width="1"/>
<path d="M230.8 617.1 L235.2 618.1 L240.2 616.7 L242.8 614.0" fill="none" stroke="#0000ff" stroke-width="1"/>
<path d="M222.4 623.8 L220.4 624.3 L221.4 625.5 L221.4 631.5 L223.3 633.5 L227.7 633.5 L230.2 630.3" fill="none" stroke="#0000ff" stroke-width="1"/>
<path d="M220.9 623.5 L230.2 628.5 L240.5 623.0 L243.8 624.0" fill="none" stroke="#0000ff" stroke-width="2"/>
<path d="M221.7 625.3 L230.2 630.0 L240.5 624.6" fill="none" stroke="#0000ff" stroke-width="1"/>
<path d="M246.8 608.3 L258.4 615.2 L240.2 626.1" fill="none" stroke="#0000ff" stroke-width="1"/>
<path d="M230.2 638.4 L271.6 614.3 L295.7 628.4 L254.3 652.5 Z" fill="none" stroke="#0000ff" stroke-width="1"/>
<path d="M233.5 638.4 L271.6 616.5 L292.2 628.4 L254.3 650.4 Z" fill="none" stroke="#0000ff" stroke-width="1"/>
<path d="M231.8 638.4 L271.6 615.4 L293.9 628.4 L254.3 651.4 Z" fill="none" stroke="#0000ff" stroke-width="1" stroke-dasharray="1.5 1.5"/>
<path d="M256.6 635.6 L271.9 620.2" fill="none" stroke="#0000ff" stroke-width="1"/>
<path d="M260.3 637.8 Q274.1 630.9 286.7 628.7" fill="none" stroke="#0000ff" stroke-width="1.8"/>
<path d="M240.2 638.4 L251.8 638.4" fill="none" stroke="#0000ff" stroke-width="1"/>
<path d="M251.0 639.3 L252.8 637.6 L254.5 639.3 L252.8 641.1 Z" fill="#0000ff" stroke="#0000ff" stroke-width="1"/>
<path d="M254.3 641.6 L254.3 647.6" fill="none" stroke="#0000ff" stroke-width="1"/>
<path d="M248.4 645.6 L254.3 642.8" fill="none" stroke="#0000ff" stroke-width="1"/>
<path d="M240.2 642.8 L242.8 642.6 L245.3 644.7 L243.4 646.3 Z" fill="#0000ff" stroke="#0000ff" stroke-width="1"/>
<path d="M289.4 640.8 L296.9 636.5 L308.8 643.0 L308.8 644.3" fill="none" stroke="#0000ff" stroke-width="1"/>
<path d="M289.4 640.8 L306.3 649.3 L308.8 643.3" fill="none" stroke="#0000ff" stroke-width="1"/>
<path d="M290.4 642.6 L305.4 650.4" fill="none" stroke="#0000ff" stroke-width="1"/>
<path d="M290.6 641.5 L290.6 655.6 L296.3 658.3 L296.3 660.8 L300.4 662.5 L300.4 667.9" fill="none" stroke="#0000ff" stroke-width="1"/>
<path d="M305.1 649.5 L305.1 673.4" fill="none" stroke="#0000ff" stroke-width="1"/>
<path d="M308.0 644.5 L308.0 671.9" fill="none" stroke="#0000ff" stroke-width="1"/>
<path d="M308.8 643.6 L321.8 643.6 L324.8 647.4 L324.8 652.4 L319.5 657.1 L308.8 657.1" fill="none" stroke="#0000ff" stroke-width="1"/>
<path d="M308.8 658.1 L319.5 658.1" fill="none" stroke="#0000ff" stroke-width="1"/>
<path d="M308.8 659.1 L318.2 659.1 L321.8 655.3" fill="none" stroke="#0000ff" stroke-width="1"/>
<path d="M308.8 661.2 L313.2 662.2 L318.2 660.8 L320.8 658.1" fill="none" stroke="#0000ff" stroke-width="1"/>
<path d="M300.4 667.9 L298.4 668.4 L299.4 669.6 L299.4 675.6 L301.3 677.6 L305.7 677.6 L308.2 674.4" fill="none" stroke="#0000ff" stroke-width="1"/>
<path d="M298.9 667.6 L308.2 672.6 L318.5 667.1 L321.8 668.1" fill="none" stroke="#0000ff" stroke-width="2"/>
<path d="M299.7 669.4 L308.2 674.1 L318.5 668.7" fill="none" stroke="#0000ff" stroke-width="1"/>
<path d="M324.8 652.4 L336.4 659.3 L318.2 670.2" fill="none" stroke="#0000ff" stroke-width="1"/>
<ellipse cx="329.5" cy="653.9" rx="15.2" ry="8.6" transform="rotate(6 329.5 653.9)" fill="none" stroke="#0000ff" stroke-width="1"/>
<ellipse cx="329.5" cy="655.5" rx="15.2" ry="8.6" transform="rotate(6 329.5 655.5)" fill="none" stroke="#0000ff" stroke-width="1"/>
<path d="M314.9 659.0 Q317.3 665.6 329.3 668.2 Q339.3 666.6 343.9 657.6" fill="none" stroke="#0000ff" stroke-width="1"/>
<ellipse cx="334.1" cy="653.5" rx="9.6" ry="5.4" transform="rotate(14 334.1 653.5)" fill="none" stroke="#0000ff" stroke-width="1"/>
<path d="M326.3 644.5 L330.3 644.5 L330.3 648.3 L326.3 648.8 L326.3 652.4 L329.5 653.1 L330.3 656.0 L323.7 656.6 L321.9 651.0 L324.3 647.0 Z" fill="#0000ff" stroke="#0000ff" stroke-width="1"/>
<path d="M330.3 659.0 L336.3 661.2 L336.5 662.2 L330.1 660.2 Z" fill="#0000ff" stroke="#0000ff" stroke-width="1"/>
<path d="M315.7 653.2 L324.3 659.8 L334.3 665.0" fill="none" stroke="#0000ff" stroke-width="1"/>
<path d="M320.4 665.2 L316.6 667.7 L316.6 685.8" fill="none" stroke="#0000ff" stroke-width="1"/>
<path d="M321.6 671.0 L322.7 670.0 L323.9 671.0 L322.7 672.1 Z" fill="#0000ff" stroke="#0000ff" stroke-width="1"/>
<path d="M325.7 669.7 L327.4 669.7" fill="none" stroke="#0000ff" stroke-width="1"/>
<ellipse cx="580.1" cy="415.2" rx="15" ry="8.6" transform="rotate(-8 580.1 415.2)" fill="none" stroke="#0000ff" stroke-width="1"/>
<ellipse cx="580.1" cy="416.8" rx="15" ry="8.6" transform="rotate(-8 580.1 416.8)" fill="none" stroke="#0000ff" stroke-width="1"/>
<path d="M565.4 419.0 Q568.0 425.0 578.6 427.6 Q590.0 426.0 595.0 418.0" fill="none" stroke="#0000ff" stroke-width="1"/>
<ellipse cx="582.5" cy="416.0" rx="11" ry="5.2" transform="rotate(-18 582.5 416.0)" fill="none" stroke="#0000ff" stroke-width="1"/>
<path d="M573.9 401.9 L578.1 401.9 L580.2 404.2 L580.2 408.4 L577.9 412.9 L573.9 412.9 L571.2 410.7 L573.9 408.8 Z" fill="#0000ff" stroke="#0000ff" stroke-width="1"/>
<path d="M566.4 416.4 L574.0 412.6 L585.0 407.6" fill="none" stroke="#0000ff" stroke-width="1"/>
<path d="M571.0 422.6 L579.0 418.6 L588.0 410.6 L591.6 415.0" fill="none" stroke="#0000ff" stroke-width="1"/>
<path d="M578.0 421.6 L583.0 418.2 L583.4 421.4 L579.0 423.0 Z" fill="#0000ff" stroke="#0000ff" stroke-width="1"/>
<path d="M574.4 426.0 L574.4 435.8" fill="none" stroke="#0000ff" stroke-width="1"/>
<path d="M627.9 457.2 L604.4 443.5 L628.6 429.2 L669.8 453.3 L646.2 466.6" fill="none" stroke="#0000ff" stroke-width="1"/>
<path d="M627.9 454.2 L608.9 443.5 L628.6 432.0 L664.7 453.3 L646.2 463.7" fill="none" stroke="#0000ff" stroke-width="1"/>
<path d="M627.9 455.6 L606.6 443.5 L628.6 430.6 L667.2 453.3 L646.2 465.0" fill="none" stroke="#0000ff" stroke-width="1" stroke-dasharray="1.5 1.5"/>
<path d="M664.7 453.3 L666.6 452.2 L666.6 454.5 Z" fill="none" stroke="#0000ff" stroke-width="1"/>
<path d="M612.9 443.5 L623.8 443.5" fill="none" stroke="#0000ff" stroke-width="1"/>
<path d="M625.3 442.4 L626.9 440.8 L628.5 442.4 L626.9 444.0 Z" fill="#0000ff" stroke="#0000ff" stroke-width="1"/>
<path d="M628.6 435.2 L628.6 440.4" fill="none" stroke="#0000ff" stroke-width="1"/>
<path d="M630.4 446.1 L637.3 452.8" fill="none" stroke="#0000ff" stroke-width="1"/>
<path d="M633.0 444.2 L661.2 453.8" fill="none" stroke="#0000ff" stroke-width="1.4"/>
<path d="M627.7 458.3 L641.6 451.3 L645.9 453.7 L631.9 460.8 Z" fill="none" stroke="#0000ff" stroke-width="1"/>
<path d="M629.0 462.1 L644.8 454.4" fill="none" stroke="#0000ff" stroke-width="1"/>
<path d="M627.9 458.3 L627.9 486.4" fill="none" stroke="#0000ff" stroke-width="1"/>
<path d="M631.5 461.0 L631.5 477.3" fill="none" stroke="#0000ff" stroke-width="1"/>
<path d="M645.9 453.7 L645.9 468.3 L640.7 471.5 L640.7 473.7 L635.7 474.8" fill="none" stroke="#0000ff" stroke-width="1"/>
<path d="M630.4 462.8 L631.5 462.1 L632.6 462.8 L631.5 464.8 Z" fill="none" stroke="#0000ff" stroke-width="1"/>
<path d="M627.7 456.9 Q614.2 456.7 611.6 462.1 Q612.9 470.1 627.7 472.8" fill="none" stroke="#0000ff" stroke-width="1"/>
<path d="M611.6 462.5 Q614.2 470.1 627.7 471.2" fill="none" stroke="#0000ff" stroke-width="2.2"/>
<path d="M614.2 471.2 L618.7 473.2 L625.4 473.2" fill="none" stroke="#0000ff" stroke-width="1"/>
<path d="M627.7 456.9 L616.0 457.4 L612.9 459.4" fill="none" stroke="#0000ff" stroke-width="1.6"/>
<path d="M616.9 473.7 L613.4 474.8 L613.4 481.1" fill="none" stroke="#0000ff" stroke-width="1"/>
<path d="M615.1 479.8 L627.7 487.0 L636.4 481.8 L636.4 477.3 L634.4 475.7" fill="none" stroke="#0000ff" stroke-width="2"/>
<path d="M616.5 477.3 L627.7 484.0" fill="none" stroke="#0000ff" stroke-width="1"/>
<path d="M618.3 475.7 L621.9 476.4 L625.9 474.8" fill="none" stroke="#0000ff" stroke-width="1"/>
<path d="M775.4 496.8 L778.7 496.1 L796.5 506.3 L775.4 517.9 L758.7 509.2" fill="none" stroke="#0000ff" stroke-width="1"/>
<path d="M758.7 509.2 L758.7 524.5 L775.4 533.6 L796.5 521.6 L796.5 506.3" fill="none" stroke="#0000ff" stroke-width="1"/>
<path d="M775.4 496.8 L775.4 533.6" fill="none" stroke="#0000ff" stroke-width="1"/>
<path d="M776.8 499.0 L789.2 506.3 L775.4 514.3 L766.3 509.2 L766.3 505.9" fill="none" stroke="#0000ff" stroke-width="1"/>
<path d="M739.4 500.5 L756.1 490.3 L758.3 489.2 L773.6 498.3 L772.8 500.5 L757.6 508.1 L756.8 511.4 L740.1 502.7 Z" fill="none" stroke="#0000ff" stroke-width="1"/>
<path d="M743.7 498.4 L756.8 490.9 L770.7 498.7 L757.6 506.1 Z" fill="none" stroke="#0000ff" stroke-width="1"/>
<path d="M739.4 500.5 L756.8 509.2 L773.6 499.0" fill="none" stroke="#0000ff" stroke-width="1"/>
<path d="M756.5 490.6 L756.5 504.5" fill="none" stroke="#0000ff" stroke-width="1"/>
<path d="M756.8 505.4 L769.9 500.0 L770.8 501.2 L759.0 506.9 Z" fill="#0000ff" stroke="#0000ff" stroke-width="1"/>
<path d="M741.6 503.7 L742.3 511.0 L746.6 513.4 L749.6 514.7 L752.8 510.1" fill="none" stroke="#0000ff" stroke-width="1"/>
<path d="M746.6 513.4 L746.6 515.9" fill="none" stroke="#0000ff" stroke-width="1"/>
<path d="M750.6 513.6 L753.2 510.5 L759.0 509.2" fill="none" stroke="#0000ff" stroke-width="1"/>
<path d="M746.3 495.7 L746.3 481.6 L750.6 481.6 L752.5 485.9 L751.4 483.7" fill="none" stroke="#0000ff" stroke-width="1"/>
<path d="M749.6 481.9 L752.1 481.9 L752.1 483.7 L749.6 483.7 Z" fill="#0000ff" stroke="#0000ff" stroke-width="1"/>
<path d="M766.7 493.2 L766.7 485.6 L769.9 485.9 L771.4 488.5 L770.3 487.0" fill="none" stroke="#0000ff" stroke-width="1"/>
<path d="M740.1 520.5 L746.3 516.8 L746.3 523.4 Z" fill="none" stroke="#0000ff" stroke-width="1"/>
<path d="M746.3 516.8 L750.6 513.6" fill="none" stroke="#0000ff" stroke-width="1"/>
<ellipse cx="198.2" cy="696.3" rx="15.2" ry="8.6" transform="rotate(6 198.2 696.3)" fill="none" stroke="#0000ff" stroke-width="1"/>
<ellipse cx="198.2" cy="697.9" rx="15.2" ry="8.6" transform="rotate(6 198.2 697.9)" fill="none" stroke="#0000ff" stroke-width="1"/>
<path d="M183.6 701.4 Q186.0 708.0 198.0 710.6 Q208.0 709.0 212.6 700.0" fill="none" stroke="#0000ff" stroke-width="1"/>
<ellipse cx="202.8" cy="695.9" rx="9.6" ry="5.4" transform="rotate(14 202.8 695.9)" fill="none" stroke="#0000ff" stroke-width="1"/>
<path d="M195.0 686.9 L199.0 686.9 L199.0 690.7 L195.0 691.2 L195.0 694.8 L198.2 695.5 L199.0 698.4 L192.4 699.0 L190.6 693.4 L193.0 689.4 Z" fill="#0000ff" stroke="#0000ff" stroke-width="1"/>
<path d="M199.0 701.4 L205.0 703.6 L205.2 704.6 L198.8 702.6 Z" fill="#0000ff" stroke="#0000ff" stroke-width="1"/>
<path d="M184.4 695.6 L193.0 702.2 L203.0 707.4" fill="none" stroke="#0000ff" stroke-width="1"/>
<path d="M189.1 707.6 L185.3 710.1 L185.3 728.2" fill="none" stroke="#0000ff" stroke-width="1"/>
<path d="M190.3 713.4 L191.4 712.4 L192.6 713.4 L191.4 714.5 Z" fill="#0000ff" stroke="#0000ff" stroke-width="1"/>
<path d="M194.4 712.1 L196.1 712.1" fill="none" stroke="#0000ff" stroke-width="1"/>
<path d="M211.4 714.7 L218.9 710.4 L230.8 716.9 L230.8 718.2" fill="none" stroke="#0000ff" stroke-width="1"/>
<path d="M211.4 714.7 L228.3 723.2 L230.8 717.2" fill="none" stroke="#0000ff" stroke-width="1"/>
<path d="M212.4 716.5 L227.4 724.3" fill="none" stroke="#0000ff" stroke-width="1"/>
<path d="M212.6 715.4 L212.6 729.5 L218.3 732.2 L218.3 734.7 L222.4 736.4 L222.4 741.8" fill="none" stroke="#0000ff" stroke-width="1"/>
<path d="M227.1 723.4 L227.1 747.3" fill="none" stroke="#0000ff" stroke-width="1"/>
<path d="M230.0 718.4 L230.0 745.8" fill="none" stroke="#0000ff" stroke-width="1"/>
<path d="M230.8 717.5 L243.8 717.5 L246.8 721.3 L246.8 726.3 L241.5 731.0 L230.8 731.0" fill="none" stroke="#0000ff" stroke-width="1"/>
<path d="M230.8 732.0 L241.5 732.0" fill="none" stroke="#0000ff" stroke-width="1"/>
<path d="M230.8 733.0 L240.2 733.0 L243.8 729.2" fill="none" stroke="#0000ff" stroke-width="1"/>
<path d="M230.8 735.1 L235.2 736.1 L240.2 734.7 L242.8 732.0" fill="none" stroke="#0000ff" stroke-width="1"/>
<path d="M222.4 741.8 L220.4 742.3 L221.4 743.5 L221.4 749.5 L223.3 751.5 L227.7 751.5 L230.2 748.3" fill="none" stroke="#0000ff" stroke-width="1"/>
<path d="M220.9 741.5 L230.2 746.5 L240.5 741.0 L243.8 742.0" fill="none" stroke="#0000ff" stroke-width="2"/>
<path d="M221.7 743.3 L230.2 748.0 L240.5 742.6" fill="none" stroke="#0000ff" stroke-width="1"/>
<path d="M246.8 726.3 L258.4 733.2 L240.2 744.1" fill="none" stroke="#0000ff" stroke-width="1"/>
<path d="M230.2 756.4 L271.6 732.3 L295.7 746.4 L254.3 770.5 Z" fill="none" stroke="#0000ff" stroke-width="1"/>
<path d="M233.5 756.4 L271.6 734.5 L292.2 746.4 L254.3 768.4 Z" fill="none" stroke="#0000ff" stroke-width="1"/>
<path d="M231.8 756.4 L271.6 733.4 L293.9 746.4 L254.3 769.4 Z" fill="none" stroke="#0000ff" stroke-width="1" stroke-dasharray="1.5 1.5"/>
<path d="M256.6 753.6 L271.9 738.2" fill="none" stroke="#0000ff" stroke-width="1"/>
<path d="M260.3 755.8 Q274.1 748.9 286.7 746.7" fill="none" stroke="#0000ff" stroke-width="1.8"/>
<path d="M240.2 756.4 L251.8 756.4" fill="none" stroke="#0000ff" stroke-width="1"/>
<path d="M251.0 757.3 L252.8 755.6 L254.5 757.3 L252.8 759.1 Z" fill="#0000ff" stroke="#0000ff" stroke-width="1"/>
<path d="M254.3 759.6 L254.3 765.6" fill="none" stroke="#0000ff" stroke-width="1"/>
<path d="M248.4 763.6 L254.3 760.8" fill="none" stroke="#0000ff" stroke-width="1"/>
<path d="M240.2 760.8 L242.8 760.6 L245.3 762.7 L243.4 764.3 Z" fill="#0000ff" stroke="#0000ff" stroke-width="1"/>
<path d="M289.4 758.8 L296.9 754.5 L308.8 761.0 L308.8 762.3" fill="none" stroke="#0000ff" stroke-width="1"/>
<path d="M289.4 758.8 L306.3 767.3 L308.8 761.3" fill="none" stroke="#0000ff" stroke-width="1"/>
<path d="M290.4 760.6 L305.4 768.4" fill="none" stroke="#0000ff" stroke-width="1"/>
<path d="M290.6 759.5 L290.6 773.6 L296.3 776.3 L296.3 778.8 L300.4 780.5 L300.4 785.9" fill="none" stroke="#0000ff" stroke-width="1"/>
<path d="M305.1 767.5 L305.1 791.4" fill="none" stroke="#0000ff" stroke-width="1"/>
<path d="M308.0 762.5 L308.0 789.9" fill="none" stroke="#0000ff" stroke-width="1"/>
<path d="M308.8 761.6 L321.8 761.6 L324.8 765.4 L324.8 770.4 L319.5 775.1 L308.8 775.1" fill="none" stroke="#0000ff" stroke-width="1"/>
<path d="M308.8 776.1 L319.5 776.1" fill="none" stroke="#0000ff" stroke-width="1"/>
<path d="M308.8 777.1 L318.2 777.1 L321.8 773.3" fill="none" stroke="#0000ff" stroke-width="1"/>
<path d="M308.8 779.2 L313.2 780.2 L318.2 778.8 L320.8 776.1" fill="none" stroke="#0000ff" stroke-width="1"/>
<path d="M300.4 785.9 L298.4 786.4 L299.4 787.6 L299.4 793.6 L301.3 795.6 L305.7 795.6 L308.2 792.4" fill="none" stroke="#0000ff" stroke-width="1"/>
<path d="M298.9 785.6 L308.2 790.6 L318.5 785.1 L321.8 786.1" fill="none" stroke="#0000ff" stroke-width="2"/>
<path d="M299.7 787.4 L308.2 792.1 L318.5 786.7" fill="none" stroke="#0000ff" stroke-width="1"/>
<path d="M324.8 770.4 L336.4 777.3 L318.2 788.2" fill="none" stroke="#0000ff" stroke-width="1"/>
<ellipse cx="329.5" cy="771.9" rx="15.2" ry="8.6" transform="rotate(6 329.5 771.9)" fill="none" stroke="#0000ff" stroke-width="1"/>
<ellipse cx="329.5" cy="773.5" rx="15.2" ry="8.6" transform="rotate(6 329.5 773.5)" fill="none" stroke="#0000ff" stroke-width="1"/>
<path d="M314.9 777.0 Q317.3 783.6 329.3 786.2 Q339.3 784.6 343.9 775.6" fill="none" stroke="#0000ff" stroke-width="1"/>
<ellipse cx="334.1" cy="771.5" rx="9.6" ry="5.4" transform="rotate(14 334.1 771.5)" fill="none" stroke="#0000ff" stroke-width="1"/>
<path d="M326.3 762.5 L330.3 762.5 L330.3 766.3 L326.3 766.8 L326.3 770.4 L329.5 771.1 L330.3 774.0 L323.7 774.6 L321.9 769.0 L324.3 765.0 Z" fill="#0000ff" stroke="#0000ff" stroke-width="1"/>
<path d="M330.3 777.0 L336.3 779.2 L336.5 780.2 L330.1 778.2 Z" fill="#0000ff" stroke="#0000ff" stroke-width="1"/>
<path d="M315.7 771.2 L324.3 777.8 L334.3 783.0" fill="none" stroke="#0000ff" stroke-width="1"/>
<path d="M320.4 783.2 L316.6 785.7 L316.6 803.8" fill="none" stroke="#0000ff" stroke-width="1"/>
<path d="M321.6 789.0 L322.7 788.0 L323.9 789.0 L322.7 790.1 Z" fill="#0000ff" stroke="#0000ff" stroke-width="1"/>
<path d="M325.7 787.7 L327.4 787.7" fill="none" stroke="#0000ff" stroke-width="1"/>
<ellipse cx="580.1" cy="533.5" rx="15" ry="8.6" transform="rotate(-8 580.1 533.5)" fill="none" stroke="#0000ff" stroke-width="1"/>
<ellipse cx="580.1" cy="535.1" rx="15" ry="8.6" transform="rotate(-8 580.1 535.1)" fill="none" stroke="#0000ff" stroke-width="1"/>
<path d="M565.4 537.3 Q568.0 543.3 578.6 545.9 Q590.0 544.3 595.0 536.3" fill="none" stroke="#0000ff" stroke-width="1"/>
<ellipse cx="582.5" cy="534.3" rx="11" ry="5.2" transform="rotate(-18 582.5 534.3)" fill="none" stroke="#0000ff" stroke-width="1"/>
<path d="M573.9 520.2 L578.1 520.2 L580.2 522.5 L580.2 526.7 L577.9 531.2 L573.9 531.2 L571.2 529.0 L573.9 527.1 Z" fill="#0000ff" stroke="#0000ff" stroke-width="1"/>
<path d="M566.4 534.7 L574.0 530.9 L585.0 525.9" fill="none" stroke="#0000ff" stroke-width="1"/>
<path d="M571.0 540.9 L579.0 536.9 L588.0 528.9 L591.6 533.3" fill="none" stroke="#0000ff" stroke-width="1"/>
<path d="M578.0 539.9 L583.0 536.5 L583.4 539.7 L579.0 541.3 Z" fill="#0000ff" stroke="#0000ff" stroke-width="1"/>
<path d="M574.4 544.3 L574.4 554.1" fill="none" stroke="#0000ff" stroke-width="1"/>
<path d="M627.9 575.2 L604.4 561.5 L628.6 547.2 L669.8 571.3 L646.2 584.6" fill="none" stroke="#0000ff" stroke-width="1"/>
<path d="M627.9 572.2 L608.9 561.5 L628.6 550.0 L664.7 571.3 L646.2 581.7" fill="none" stroke="#0000ff" stroke-width="1"/>
<path d="M627.9 573.6 L606.6 561.5 L628.6 548.6 L667.2 571.3 L646.2 583.0" fill="none" stroke="#0000ff" stroke-width="1" stroke-dasharray="1.5 1.5"/>
<path d="M664.7 571.3 L666.6 570.2 L666.6 572.5 Z" fill="none" stroke="#0000ff" stroke-width="1"/>
<path d="M612.9 561.5 L623.8 561.5" fill="none" stroke="#0000ff" stroke-width="1"/>
<path d="M625.3 560.4 L626.9 558.8 L628.5 560.4 L626.9 562.0 Z" fill="#0000ff" stroke="#0000ff" stroke-width="1"/>
<path d="M628.6 553.2 L628.6 558.4" fill="none" stroke="#0000ff" stroke-width="1"/>
<path d="M630.4 564.1 L637.3 570.8" fill="none" stroke="#0000ff" stroke-width="1"/>
<path d="M633.0 562.2 L661.2 571.8" fill="none" stroke="#0000ff" stroke-width="1.4"/>
<path d="M627.7 576.3 L641.6 569.3 L645.9 571.7 L631.9 578.8 Z" fill="none" stroke="#0000ff" stroke-width="1"/>
<path d="M629.0 580.1 L644.8 572.4" fill="none" stroke="#0000ff" stroke-width="1"/>
<path d="M627.9 576.3 L627.9 604.4" fill="none" stroke="#0000ff" stroke-width="1"/>
<path d="M631.5 579.0 L631.5 595.3" fill="none" stroke="#0000ff" stroke-width="1"/>
<path d="M645.9 571.7 L645.9 586.3 L640.7 589.5 L640.7 591.7 L635.7 592.8" fill="none" stroke="#0000ff" stroke-width="1"/>
<path d="M630.4 580.8 L631.5 580.1 L632.6 580.8 L631.5 582.8 Z" fill="none" stroke="#0000ff" stroke-width="1"/>
<path d="M627.7 574.9 Q614.2 574.7 611.6 580.1 Q612.9 588.1 627.7 590.8" fill="none" stroke="#0000ff" stroke-width="1"/>
<path d="M611.6 580.5 Q614.2 588.1 627.7 589.2" fill="none" stroke="#0000ff" stroke-width="2.2"/>
<path d="M614.2 589.2 L618.7 591.2 L625.4 591.2" fill="none" stroke="#0000ff" stroke-width="1"/>
<path d="M627.7 574.9 L616.0 575.4 L612.9 577.4" fill="none" stroke="#0000ff" stroke-width="1.6"/>
<path d="M616.9 591.7 L613.4 592.8 L613.4 599.1" fill="none" stroke="#0000ff" stroke-width="1"/>
<path d="M615.1 597.8 L627.7 605.0 L636.4 599.8 L636.4 595.3 L634.4 593.7" fill="none" stroke="#0000ff" stroke-width="2"/>
<path d="M616.5 595.3 L627.7 602.0" fill="none" stroke="#0000ff" stroke-width="1"/>
<path d="M618.3 593.7 L621.9 594.4 L625.9 592.8" fill="none" stroke="#0000ff" stroke-width="1"/>
<path d="M775.4 614.8 L778.7 614.1 L796.5 624.3 L775.4 635.9 L758.7 627.2" fill="none" stroke="#0000ff" stroke-width="1"/>
<path d="M758.7 627.2 L758.7 642.5 L775.4 651.6 L796.5 639.6 L796.5 624.3" fill="none" stroke="#0000ff" stroke-width="1"/>
<path d="M775.4 614.8 L775.4 651.6" fill="none" stroke="#0000ff" stroke-width="1"/>
<path d="M776.8 617.0 L789.2 624.3 L775.4 632.3 L766.3 627.2 L766.3 623.9" fill="none" stroke="#0000ff" stroke-width="1"/>
<path d="M739.4 618.5 L756.1 608.3 L758.3 607.2 L773.6 616.3 L772.8 618.5 L757.6 626.1 L756.8 629.4 L740.1 620.7 Z" fill="none" stroke="#0000ff" stroke-width="1"/>
<path d="M743.7 616.4 L756.8 608.9 L770.7 616.7 L757.6 624.1 Z" fill="none" stroke="#0000ff" stroke-width="1"/>
<path d="M739.4 618.5 L756.8 627.2 L773.6 617.0" fill="none" stroke="#0000ff" stroke-width="1"/>
<path d="M756.5 608.6 L756.5 622.5" fill="none" stroke="#0000ff" stroke-width="1"/>
<path d="M756.8 623.4 L769.9 618.0 L770.8 619.2 L759.0 624.9 Z" fill="#0000ff" stroke="#0000ff" stroke-width="1"/>
<path d="M741.6 621.7 L742.3 629.0 L746.6 631.4 L749.6 632.7 L752.8 628.1" fill="none" stroke="#0000ff" stroke-width="1"/>
<path d="M746.6 631.4 L746.6 633.9" fill="none" stroke="#0000ff" stroke-width="1"/>
<path d="M750.6 631.6 L753.2 628.5 L759.0 627.2" fill="none" stroke="#0000ff" stroke-width="1"/>
<path d="M746.3 613.7 L746.3 599.6 L750.6 599.6 L752.5 603.9 L751.4 601.7" fill="none" stroke="#0000ff" stroke-width="1"/>
<path d="M749.6 599.9 L752.1 599.9 L752.1 601.7 L749.6 601.7 Z" fill="#0000ff" stroke="#0000ff" stroke-width="1"/>
<path d="M766.7 611.2 L766.7 603.6 L769.9 603.9 L771.4 606.5 L770.3 605.0" fill="none" stroke="#0000ff" stroke-width="1"/>
<path d="M740.1 638.5 L746.3 634.8 L746.3 641.4 Z" fill="none" stroke="#0000ff" stroke-width="1"/>
<path d="M746.3 634.8 L750.6 631.6" fill="none" stroke="#0000ff" stroke-width="1"/>
<path d="M717.4 560.0 Q717.4 557.4 719.6 556.1 L727.4 551.5 Q730.8 549.4 734.2 551.5 L743.9 557.4 Q745.8 558.6 745.8 560.8 L745.8 564.4 Q745.8 567.4 743.3 569.0 L736.0 573.5 Q732.6 575.6 729.2 573.5 L720.3 567.8 Q717.4 566.0 717.4 562.6 Z" fill="none" stroke="#0000ff" stroke-width="1"/>
<path d="M717.6 558.6 L729.1 565.4 Q732.6 567.4 736.0 565.3 L745.6 559.4" fill="none" stroke="#0000ff" stroke-width="1"/>
<path d="M724.5 445.8 Q724.5 443.2 726.7 441.9 L734.5 437.3 Q737.9 435.2 741.3 437.3 L751.0 443.2 Q752.9 444.4 752.9 446.6 L752.9 450.2 Q752.9 453.2 750.4 454.8 L743.1 459.3 Q739.7 461.4 736.3 459.3 L727.4 453.6 Q724.5 451.8 724.5 448.4 Z" fill="none" stroke="#0000ff" stroke-width="1"/>
<path d="M724.7 444.4 L736.2 451.2 Q739.7 453.2 743.1 451.1 L752.7 445.2" fill="none" stroke="#0000ff" stroke-width="1"/>
<path d="M185.3 610.2 L243.6 578.2" fill="none" stroke="#0000ff" stroke-width="1"/>
<path d="M240.2 641.6 L240.2 567.0 L243.4 565.0 L247.2 564.4 L250.3 566.0 L248.8 567.8" fill="none" stroke="#0000ff" stroke-width="1"/>
<path d="M303.8 613.2 L284.8 624.0" fill="none" stroke="#0000ff" stroke-width="1"/>
<path d="M316.4 670.3 L316.4 686.3 L371.6 653.9" fill="none" stroke="#0000ff" stroke-width="1"/>
<path d="M337.0 663.4 L346.0 669.0" fill="none" stroke="#0000ff" stroke-width="1"/>
<path d="M185.3 728.2 L243.6 696.2" fill="none" stroke="#0000ff" stroke-width="1"/>
<path d="M240.2 759.6 L240.2 685.0 L243.4 683.0 L247.2 682.4 L250.3 684.0 L248.8 685.8" fill="none" stroke="#0000ff" stroke-width="1"/>
<path d="M303.8 731.2 L284.8 742.0" fill="none" stroke="#0000ff" stroke-width="1"/>
<path d="M316.4 788.3 L316.4 804.3 L373.2 771.3" fill="none" stroke="#0000ff" stroke-width="1"/>
<path d="M337.0 781.4 L346.0 787.0" fill="none" stroke="#0000ff" stroke-width="1"/>
<path d="M243.6 578.2 L402.2 669.0 L398.0 671.4" fill="none" stroke="#0000ff" stroke-width="1"/>
<path d="M243.6 696.2 L402.0 787.6" fill="none" stroke="#0000ff" stroke-width="1"/>
<path d="M371.6 653.9 L372.6 649.2 L666.3 479.5 L669.4 479.5 L740.2 519.8" fill="none" stroke="#0000ff" stroke-width="1"/>
<path d="M390.5 681.0 L390.5 794.0 L402.0 787.6 L740.5 592.7 L740.5 574.0" fill="none" stroke="#0000ff" stroke-width="1"/>
<path d="M702.2 614.9 L740.3 638.1" fill="none" stroke="#0000ff" stroke-width="1"/>
<path d="M740.5 551.6 L740.5 543.4 L735.6 544.0 L735.0 547.6" fill="none" stroke="#0000ff" stroke-width="1"/>
<path d="M623.4 365.0 L619.0 360.0 L615.6 356.3 L613.5 357.2 L613.5 428.9 L612.0 431.4 L589.5 444.6" fill="none" stroke="#0000ff" stroke-width="1"/>
<path d="M574.4 435.8 L589.5 444.6 L612.7 457.9" fill="none" stroke="#0000ff" stroke-width="1"/>
<path d="M636.0 474.4 L646.6 477.8 L656.6 484.6" fill="none" stroke="#0000ff" stroke-width="1"/>
<path d="M646.4 476.4 L650.6 475.4 L651.0 479.2 Z" fill="none" stroke="#0000ff" stroke-width="1"/>
<path d="M707.2 501.0 L747.7 477.0 L747.7 456.3" fill="none" stroke="#0000ff" stroke-width="1"/>
<path d="M747.7 438.0 L747.7 427.2 L742.6 428.0 L741.8 432.0" fill="none" stroke="#0000ff" stroke-width="1"/>
<path d="M742.4 427.4 L744.4 427.4 L744.4 429.6 L742.4 429.6 Z" fill="#0000ff" stroke="#0000ff" stroke-width="1"/>
<path d="M613.5 473.7 L613.5 547.0 L612.0 549.5 L590.0 563.0" fill="none" stroke="#0000ff" stroke-width="1"/>
<path d="M574.6 554.0 L590.0 563.0 L613.0 576.0" fill="none" stroke="#0000ff" stroke-width="1"/>
<path d="M636.0 592.4 L641.4 591.6 L690.0 621.0" fill="none" stroke="#0000ff" stroke-width="1"/>
<path d="M641.0 590.0 L646.0 590.6 L645.0 595.4 Z" fill="none" stroke="#0000ff" stroke-width="1"/>
</g>
<g shape-rendering="crispEdges">
<path d="M343.5 511 Q343.5 505 349.6 502 L378.8 502 Q384.3 505 384.3 511 L384.3 538.6 A20.4 10.6 0 0 1 343.5 538.6 Z" fill="#f0dab2" stroke="#0000ff" stroke-width="1"/>
<ellipse cx="364" cy="499" rx="14.8" ry="8" fill="#f0dab2" stroke="#0000ff" stroke-width="1"/>
<path d="M344.2 514 A19.8 9.5 0 0 0 383.8 514" fill="none" stroke="#0000ff" stroke-width="1"/>
<path d="M350.6 503.6 A13.6 7 0 0 0 377.6 503.6" fill="none" stroke="#0000ff" stroke-width="1"/>
<ellipse cx="364.2" cy="498.6" rx="12.6" ry="6.6" fill="#7b7b7b" stroke="#0000ff" stroke-width="1.6"/>
<path d="M354.6 494.4 Q364.2 498.6 354.8 503 M373.8 494.4 Q364.2 498.6 373.6 503" fill="none" stroke="#0000ff" stroke-width="1"/>
<path d="M379.8 543.4 L384.4 545.6" stroke="#0000ff" stroke-width="1"/>
</g>
<rect x="389.8" y="559" width="1.5" height="108" fill="#3fcfdf" />
<g shape-rendering="crispEdges">
<rect x="384" y="545" width="14" height="14" fill="#c41414" />
<rect x="385" y="546" width="5" height="5" fill="#e9c9d1" />
<rect x="392" y="546" width="5" height="5" fill="#e9c9d1" />
<rect x="385" y="553" width="5" height="5" fill="#e9c9d1" />
<rect x="392" y="553" width="5" height="5" fill="#e9c9d1" />
<rect x="385" y="546" width="5" height="1" fill="#f1dde2" />
<rect x="385" y="546" width="1" height="5" fill="#f1dde2" />
<rect x="392" y="546" width="5" height="1" fill="#f1dde2" />
<rect x="396" y="546" width="1" height="5" fill="#f1dde2" />
<rect x="385" y="557" width="5" height="1" fill="#f1dde2" />
<rect x="385" y="553" width="1" height="5" fill="#f1dde2" />
<rect x="392" y="557" width="5" height="1" fill="#f1dde2" />
<rect x="396" y="553" width="1" height="5" fill="#f1dde2" />
<rect x="388" y="549" width="6" height="6" fill="#b61515" />
</g>
<g shape-rendering="crispEdges">
<rect x="384" y="667" width="14" height="14" fill="#c41414" />
<rect x="385" y="668" width="5" height="5" fill="#e9c9d1" />
<rect x="392" y="668" width="5" height="5" fill="#e9c9d1" />
<rect x="385" y="675" width="5" height="5" fill="#e9c9d1" />
<rect x="392" y="675" width="5" height="5" fill="#e9c9d1" />
<rect x="385" y="668" width="5" height="1" fill="#f1dde2" />
<rect x="385" y="668" width="1" height="5" fill="#f1dde2" />
<rect x="392" y="668" width="5" height="1" fill="#f1dde2" />
<rect x="396" y="668" width="1" height="5" fill="#f1dde2" />
<rect x="385" y="679" width="5" height="1" fill="#f1dde2" />
<rect x="385" y="675" width="1" height="5" fill="#f1dde2" />
<rect x="392" y="679" width="5" height="1" fill="#f1dde2" />
<rect x="396" y="675" width="1" height="5" fill="#f1dde2" />
<rect x="388" y="671" width="6" height="6" fill="#b61515" />
</g>
<text transform="translate(413.2 574.6) rotate(-90)" font-size="15.4" fill="#2290e6" textLength="50" lengthAdjust="spacingAndGlyphs">3.3000 n</text>
<text transform="translate(413.2 696.6) rotate(-90)" font-size="15.4" fill="#2290e6" textLength="50" lengthAdjust="spacingAndGlyphs">0.1000 n</text>
</svg>
</body>
</html>
